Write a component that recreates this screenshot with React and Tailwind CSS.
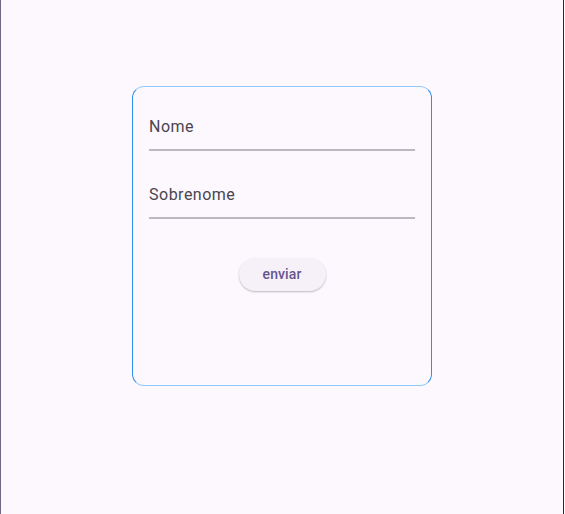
export default function App() {
  return (
    <div
      className="w-[565px] h-[514px] bg-[#fdf7fe] flex relative overflow-hidden"
      style={{ fontFamily: "Roboto, 'Noto Sans', sans-serif" }}
    >
      <div className="absolute left-0 top-0 h-full w-px bg-[#6e6a84]" />
      <div className="absolute left-[563px] top-0 h-full w-px bg-[#2b1f5e]" />
      <div className="ml-[132px] mt-[86px] w-[300px] h-[300px] rounded-[12px] border border-t-[#90caf9] border-b-[#90caf9] border-l-[#2f8ee8] border-r-[#2f8ee8] px-4 pt-4 flex flex-col">
        <div className="h-[48px] flex flex-col">
          <div className="flex-1 flex items-center pt-[2px] text-[16px] tracking-[0.5px] text-[#49454f]">
            Nome
          </div>
          <div className="h-[2px] bg-[#bcb7c0]" />
        </div>
        <div className="h-[48px] mt-[20px] flex flex-col">
          <div className="flex-1 flex items-center pt-[2px] text-[16px] tracking-[0.5px] text-[#49454f]">
            Sobrenome
          </div>
          <div className="h-[2px] bg-[#bcb7c0]" />
        </div>
        <div className="flex justify-center mt-[39px]">
          <button className="h-[33px] w-[87px] rounded-full bg-[#f6f0f8] text-[14px] font-medium tracking-[0.1px] text-[#65558f] shadow-[0_1px_2px_rgba(0,0,0,0.25)]">
            enviar
          </button>
        </div>
      </div>
    </div>
  );
}
